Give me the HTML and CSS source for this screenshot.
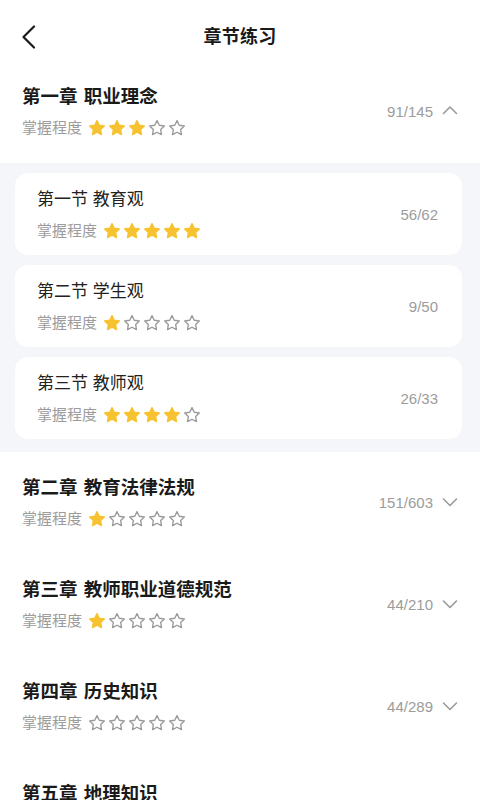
FILE: index.html
```html
<!DOCTYPE html>
<html lang="zh-CN">
<head>
<meta charset="utf-8">
<title>章节练习</title>
<link rel="stylesheet" href="styles.css">
</head>
<body>
<svg class="defs" width="0" height="0" aria-hidden="true">
  <defs>
    <symbol id="star" viewBox="0 0 24 24">
      <path d="M12 3.2l2.7 5.5 6.1.9-4.4 4.3 1 6.1L12 17.1l-5.4 2.9 1-6.1-4.4-4.3 6.1-.9z"/>
    </symbol>
  </defs>
</svg>
<div class="page">
  <header class="topbar">
    <svg class="back" width="16" height="24" viewBox="0 0 16 24"><path d="M13 1.5L2.5 12 13 22.5" fill="none" stroke="#1a1a1a" stroke-width="2.2" stroke-linecap="round" stroke-linejoin="round"/></svg>
    <h1 class="title">章节练习</h1>
  </header>

  <section class="chapter">
    <div class="info">
      <div class="ch-title">第一章 职业理念</div>
      <div class="mastery"><span>掌握程度</span><span class="stars" data-n="3"></span></div>
    </div>
    <div class="count">91/145<svg class="chev up" width="16" height="10" viewBox="0 0 16 10"><path d="M1.5 8.5L8 2l6.5 6.5" fill="none" stroke="#9a9a9a" stroke-width="1.6" stroke-linecap="round" stroke-linejoin="round"/></svg></div>
  </section>

  <div class="sections">
    <div class="card">
      <div class="info">
        <div class="sec-title">第一节 教育观</div>
        <div class="mastery"><span>掌握程度</span><span class="stars" data-n="5"></span></div>
      </div>
      <div class="count">56/62</div>
    </div>
    <div class="card">
      <div class="info">
        <div class="sec-title">第二节 学生观</div>
        <div class="mastery"><span>掌握程度</span><span class="stars" data-n="1"></span></div>
      </div>
      <div class="count">9/50</div>
    </div>
    <div class="card">
      <div class="info">
        <div class="sec-title">第三节 教师观</div>
        <div class="mastery"><span>掌握程度</span><span class="stars" data-n="4"></span></div>
      </div>
      <div class="count">26/33</div>
    </div>
  </div>

  <section class="chapter">
    <div class="info">
      <div class="ch-title">第二章 教育法律法规</div>
      <div class="mastery"><span>掌握程度</span><span class="stars" data-n="1"></span></div>
    </div>
    <div class="count">151/603<svg class="chev" width="16" height="10" viewBox="0 0 16 10"><path d="M1.5 2L8 8.5 14.5 2" fill="none" stroke="#9a9a9a" stroke-width="1.6" stroke-linecap="round" stroke-linejoin="round"/></svg></div>
  </section>

  <section class="chapter">
    <div class="info">
      <div class="ch-title">第三章 教师职业道德规范</div>
      <div class="mastery"><span>掌握程度</span><span class="stars" data-n="1"></span></div>
    </div>
    <div class="count">44/210<svg class="chev" width="16" height="10" viewBox="0 0 16 10"><path d="M1.5 2L8 8.5 14.5 2" fill="none" stroke="#9a9a9a" stroke-width="1.6" stroke-linecap="round" stroke-linejoin="round"/></svg></div>
  </section>

  <section class="chapter">
    <div class="info">
      <div class="ch-title">第四章 历史知识</div>
      <div class="mastery"><span>掌握程度</span><span class="stars" data-n="0"></span></div>
    </div>
    <div class="count">44/289<svg class="chev" width="16" height="10" viewBox="0 0 16 10"><path d="M1.5 2L8 8.5 14.5 2" fill="none" stroke="#9a9a9a" stroke-width="1.6" stroke-linecap="round" stroke-linejoin="round"/></svg></div>
  </section>

  <section class="chapter last">
    <div class="info">
      <div class="ch-title">第五章 地理知识</div>
    </div>
  </section>
</div>
<script src="app.js"></script>
</body>
</html>
```

FILE: app.js
```js
document.querySelectorAll('.stars').forEach(function (el) {
  var n = parseInt(el.getAttribute('data-n'), 10) || 0;
  var html = '';
  for (var i = 0; i < 5; i++) {
    html += '<svg class="star ' + (i < n ? 'on' : 'off') + '" width="20" height="20"><use href="#star"/></svg>';
  }
  el.innerHTML = html;
});
```

FILE: styles.css
```css
* { box-sizing: border-box; }
html, body { margin: 0; padding: 0; background: #fff; }
body {
  font-family: "Liberation Sans", "Noto Sans CJK SC", sans-serif;
  color: #1a1a1a;
  width: 480px;
  height: 800px;
  overflow: hidden;
}
.defs { position: absolute; width: 0; height: 0; }
.page { display: flex; flex-direction: column; }

.topbar {
  height: 61px;
  display: flex;
  align-items: flex-start;
  justify-content: center;
  padding-top: 24px;
  position: relative;
}
.back { position: absolute; left: 21px; top: 25px; }
.title {
  margin: 0;
  font-size: 18px;
  line-height: 26px;
  font-weight: 700;
  letter-spacing: 0.3px;
}

.chapter {
  height: 102px;
  flex-shrink: 0;
  display: flex;
  align-items: center;
  justify-content: space-between;
  padding: 0 22px 0 22px;
}
.chapter.last { height: 24px; overflow: visible; align-items: flex-start; }
.chapter .info {
  display: flex;
  flex-direction: column;
  align-self: flex-start;
  padding-top: 23px;
}
.ch-title {
  font-size: 18.5px;
  line-height: 26px;
  font-weight: 700;
  word-spacing: 1px;
}
.mastery {
  display: flex;
  align-items: center;
  gap: 5px;
  font-size: 15px;
  line-height: 22px;
  color: #9c9c9c;
  margin-top: 7px;
}
.stars { display: flex; align-items: center; }
.star { display: block; stroke-linejoin: round; }
.star.on { fill: #f7c22f; stroke: #f7c22f; stroke-width: 1.6; }
.star.off { fill: none; stroke: #9a9a9a; stroke-width: 1.6; }

.count {
  display: flex;
  align-items: center;
  gap: 9px;
  font-size: 15px;
  color: #9c9c9c;
  margin-top: -2px;
}
.chev { display: block; }
.chev.up { margin-top: -2px; }

.sections {
  background: #f5f6fa;
  padding: 10px 18px 13px 15px;
  display: flex;
  flex-direction: column;
  gap: 10px;
  flex-shrink: 0;
}
.card {
  height: 82px;
  background: #fff;
  border-radius: 13px;
  display: flex;
  align-items: center;
  justify-content: space-between;
  padding: 0 24px 0 22px;
}
.card .info {
  display: flex;
  flex-direction: column;
  align-self: flex-start;
  padding-top: 15px;
}
.sec-title {
  font-size: 17px;
  line-height: 24px;
  font-weight: 400;
  color: #222;
}
.card .mastery { margin-top: 8px; }
.card .count { margin-top: 0; }
```
